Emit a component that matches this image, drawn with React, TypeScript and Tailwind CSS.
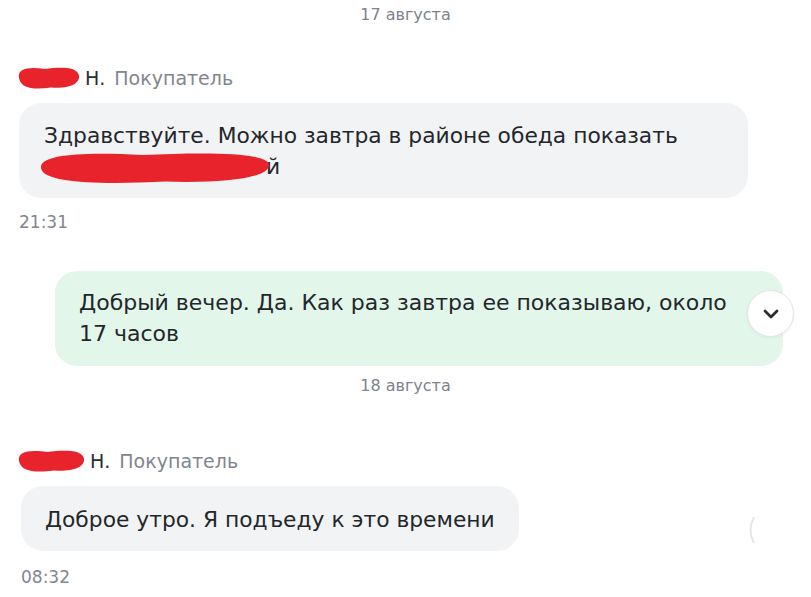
import React from "react";

function Scribble({ w, h }: { w: number; h: number }) {
  return (
    <svg width={w} height={h} viewBox={`0 0 ${w} ${h}`} className="block">
      <path
        d={`M3 ${h * 0.5} C 1 ${h * 0.1}, ${w * 0.2} ${h * 0.02}, ${w * 0.45} ${h * 0.12} C ${w * 0.7} ${h * 0.05}, ${w - 3} ${h * 0.02}, ${w - 1} ${h * 0.4} C ${w} ${h * 0.8}, ${w * 0.8} ${h * 0.95}, ${w * 0.55} ${h * 0.9} C ${w * 0.3} ${h * 0.98}, 5 ${h * 0.98}, 3 ${h * 0.5} Z`}
        fill="#e8232b"
      />
    </svg>
  );
}

function NameRow({ w }: { w: number }) {
  return (
    <div className="flex items-center h-6 pl-[16px]">
      <Scribble w={w} h={24} />
      <span className="ml-[5px] text-[19px] text-[#2a2e33]">Н.</span>
      <span className="ml-[9px] text-[19px] text-[#80868f]">Покупатель</span>
    </div>
  );
}

export default function App() {
  return (
    <div
      className="w-[811px] h-[597px] bg-white overflow-hidden flex flex-col"
      style={{ fontFamily: '"DejaVu Sans", Verdana, sans-serif' }}
    >
      <div className="pt-[5px] h-[25px] text-center text-[16px] leading-[20px] text-[#7d838c]">17 августа</div>

      <div className="mt-[41px]">
        <NameRow w={64} />
      </div>

      <div className="mt-[13px] ml-[19px] w-[729px] rounded-[22px] bg-[#f2f3f5] pl-[25px] pr-4 pt-[17px] pb-[16px] text-[21.8px] leading-[31px] text-[#23272c]">
        <div>Здравствуйте. Можно завтра в районе обеда показать</div>
        <div className="flex items-center">
          <span className="relative inline-block w-[222px] h-[31px]">
            <span className="absolute left-[-6px] top-[0px]">
              <Scribble w={232} h={34} />
            </span>
          </span>
          <span>й</span>
        </div>
      </div>

      <div className="mt-[13px] ml-[19px] text-[17px] leading-[22px] text-[#80868f]">21:31</div>

      <div className="relative mt-[38px] ml-[55px] w-[728px] rounded-[22px] bg-[#e3f6ea] pl-[24px] pr-4 pt-[16px] pb-[17px] text-[22px] leading-[31px] text-[#23272c]">
        <div>Добрый вечер. Да. Как раз завтра ее показываю, около</div>
        <div>17 часов</div>
        <div className="absolute left-[692px] top-[19px] w-[47px] h-[47px] rounded-full bg-white border border-[#e2e4e7] shadow-[0_1px_3px_rgba(0,0,0,0.06)] flex items-center justify-center">
          <svg width="18" height="12" viewBox="0 0 18 12">
            <path d="M3 3 L9 9 L15 3" fill="none" stroke="#2a2e33" strokeWidth="2.8" strokeLinecap="round" strokeLinejoin="round" />
          </svg>
        </div>
      </div>

      <div className="mt-[10px] h-[20px] text-center text-[16px] leading-[20px] text-[#7d838c]">18 августа</div>

      <div className="mt-[53px]">
        <NameRow w={69} />
      </div>

      <div className="relative">
        <div className="mt-[13px] ml-[21px] w-fit rounded-[22px] bg-[#f2f3f5] pl-[24px] pr-[24px] pt-[18px] pb-[16px] text-[21.8px] leading-[31px] text-[#23272c]">
          Доброе утро. Я подъеду к это времени
        </div>
        <svg className="absolute left-[746px] top-[42px]" width="10" height="30" viewBox="0 0 10 30">
          <path d="M8 2 Q 1 15 8 28" fill="none" stroke="#e6e7e9" strokeWidth="2" />
        </svg>
      </div>

      <div className="mt-[15px] ml-[21px] text-[17px] leading-[22px] text-[#80868f]">08:32</div>
    </div>
  );
}
